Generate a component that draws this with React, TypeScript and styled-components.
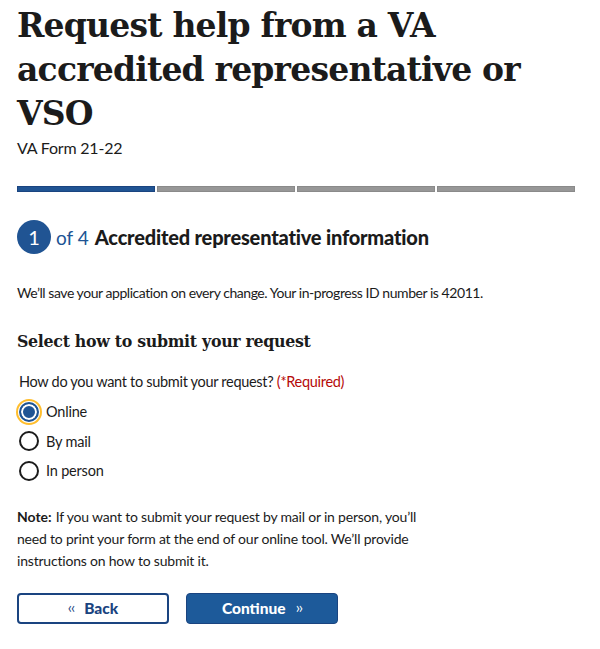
import styled, { createGlobalStyle } from "styled-components";

const GlobalStyle = createGlobalStyle`
  body {
    margin: 0;
    background: #ffffff;
    color: #1b1b1b;
    font-family: Lato, "Open Sans", sans-serif;
  }
`;

const steps = [true, false, false, false];

const radioOptions = [
  { label: "Online", checked: true },
  { label: "By mail", checked: false },
  { label: "In person", checked: false },
];

export default function App() {
  return (
    <>
      <GlobalStyle />
      <StyledPage>
        <StyledTitle>Request help from a VA accredited representative or VSO</StyledTitle>
        <StyledSubtitle>VA Form 21-22</StyledSubtitle>

        <StyledProgress>
          {steps.map((active, i) => (
            <StyledSegment key={i} active={active} />
          ))}
        </StyledProgress>

        <StyledStepHeader>
          <StyledStepCircle>1</StyledStepCircle>
          <StyledStepOf>of 4</StyledStepOf>
          <StyledStepTitle>Accredited representative information</StyledStepTitle>
        </StyledStepHeader>

        <StyledSaveText>
          We’ll save your application on every change. Your in-progress ID number is 42011.
        </StyledSaveText>

        <StyledSectionTitle>Select how to submit your request</StyledSectionTitle>

        <StyledFieldset>
          <StyledLegend>
            How do you want to submit your request? <span>(*Required)</span>
          </StyledLegend>
          {radioOptions.map(({ label, checked }) => (
            <StyledRadioRow key={label}>
              <StyledRadio checked={checked} />
              {label}
            </StyledRadioRow>
          ))}
        </StyledFieldset>

        <StyledNote>
          <StyledNoteLabel>Note:</StyledNoteLabel>If you want to submit your request by mail or in
          person, you’ll need to print your form at the end of our online tool. We’ll provide
          instructions on how to submit it.
        </StyledNote>

        <StyledButtons>
          <StyledButton variant="outline">
            <StyledArrow>‹‹</StyledArrow>
            Back
          </StyledButton>
          <StyledButton variant="primary">
            Continue
            <StyledArrow>››</StyledArrow>
          </StyledButton>
        </StyledButtons>
      </StyledPage>
    </>
  );
}

const StyledPage = styled.div`
  padding: 0 25px 0 17px;
`;

const StyledTitle = styled.h1`
  margin: 0;
  padding-top: 4px;
  font-family: "DejaVu Serif", serif;
  font-weight: 700;
  font-size: 33px;
  line-height: 44px;
  letter-spacing: -0.8px;
  color: #1b1b1b;
  width: 540px;
`;

const StyledSubtitle = styled.div`
  font-size: 16px;
  line-height: 24px;
  letter-spacing: -0.2px;
`;

const StyledProgress = styled.div`
  display: flex;
  gap: 2px;
  margin-top: 26px;
  width: 558px;
`;

const StyledSegment = styled.div<{ active: boolean }>`
  flex: 1;
  height: 6px;
  box-sizing: border-box;
  background: ${({ active }) => (active ? "#205493" : "#979797")};
  border: 1px solid ${({ active }) => (active ? "#1a4480" : "#8a8a8a")};
`;

const StyledStepHeader = styled.div`
  display: flex;
  align-items: center;
  margin-top: 28px;
`;

const StyledStepCircle = styled.div`
  width: 34px;
  height: 34px;
  border-radius: 50%;
  background: #205493;
  color: #ffffff;
  display: flex;
  align-items: center;
  justify-content: center;
  font-size: 20px;
  flex-shrink: 0;
`;

const StyledStepOf = styled.span`
  color: #205493;
  font-size: 19px;
  margin-left: 5px;
`;

const StyledStepTitle = styled.h2`
  margin: 0 0 0 6px;
  font-size: 20px;
  font-weight: 900;
  letter-spacing: -0.2px;
`;

const StyledSaveText = styled.p`
  margin: 28px 0 0;
  font-size: 14px;
  line-height: 22px;
  letter-spacing: -0.45px;
`;

const StyledSectionTitle = styled.h3`
  margin: 25px 0 0;
  font-family: "DejaVu Serif", serif;
  font-size: 15.8px;
  font-weight: 700;
  line-height: 26px;
  letter-spacing: -0.3px;
`;

const StyledFieldset = styled.div`
  margin-top: 16px;
  padding-left: 2px;
`;

const StyledLegend = styled.div`
  font-size: 14.5px;
  line-height: 22px;
  letter-spacing: -0.3px;
  margin-bottom: 4px;
  & > span {
    color: #b50909;
  }
`;

const StyledRadioRow = styled.label`
  display: flex;
  align-items: center;
  gap: 7px;
  height: 29.5px;
  font-size: 14.5px;
  letter-spacing: -0.2px;
`;

const StyledRadio = styled.span<{ checked: boolean }>`
  width: 20px;
  height: 20px;
  box-sizing: border-box;
  border-radius: 50%;
  flex-shrink: 0;
  border: 2px solid ${({ checked }) => (checked ? "#205493" : "#1b1b1b")};
  background: ${({ checked }) => (checked ? "#205493" : "#ffffff")};
  box-shadow: ${({ checked }) =>
    checked ? "inset 0 0 0 2px #ffffff, 0 0 0 1px #ffffff, 0 0 0 3px #ffbe2e" : "none"};
`;

const StyledNote = styled.p`
  margin: 20px 0 0;
  width: 425px;
  font-size: 14px;
  line-height: 22px;
  letter-spacing: -0.2px;
`;

const StyledNoteLabel = styled.strong`
  font-weight: 700;
  letter-spacing: 0;
  margin-right: 4px;
`;

const StyledButtons = styled.div`
  display: flex;
  gap: 17px;
  margin-top: 21px;
`;

const StyledButton = styled.button<{ variant: "outline" | "primary" }>`
  width: 152px;
  height: 31px;
  box-sizing: border-box;
  border-radius: 4px;
  font-family: Lato, sans-serif;
  font-weight: 900;
  font-size: 15.5px;
  display: flex;
  align-items: center;
  justify-content: center;
  gap: 10px;
  border: ${({ variant }) => (variant === "outline" ? "2px solid #1a4480" : "1px solid #1a4480")};
  background: ${({ variant }) => (variant === "outline" ? "#ffffff" : "#1d5a9a")};
  color: ${({ variant }) => (variant === "outline" ? "#1a4480" : "#ffffff")};
`;

const StyledArrow = styled.span`
  font-weight: 400;
  font-size: 15px;
  letter-spacing: -1px;
  margin-top: -2px;
`;
